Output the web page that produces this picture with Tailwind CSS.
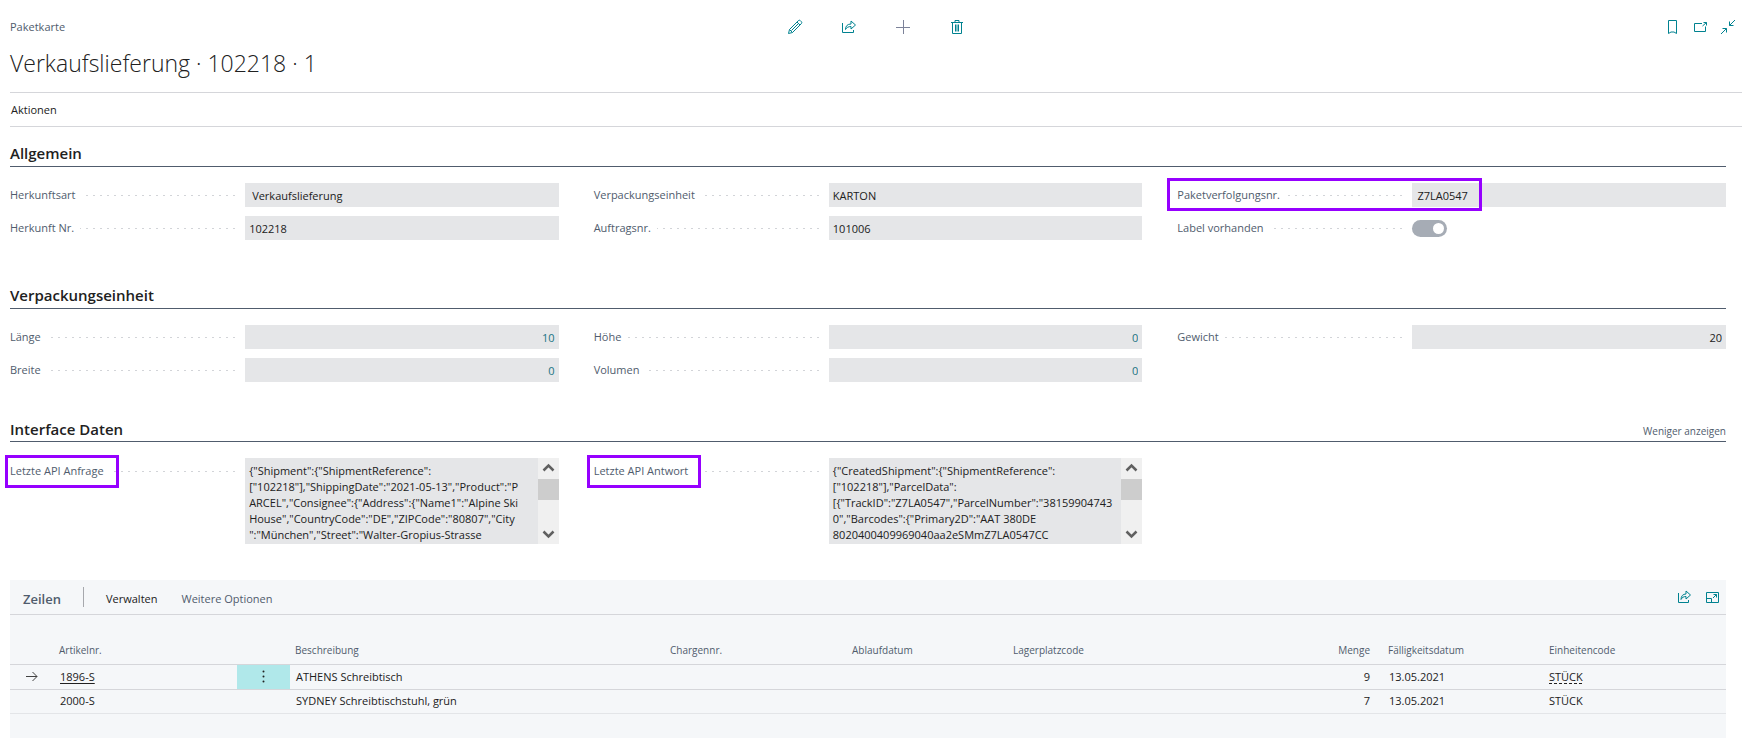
<!DOCTYPE html>
<html lang="de">
<head>
    <meta charset="UTF-8">
    <meta name="viewport" content="width=device-width, initial-scale=1.0">
    <title>Paketkarte - Verkaufslieferung 102218</title>
    <!-- Tailwind CSS -->
    <script src="https://cdn.jsdelivr.net/npm/@tailwindcss/browser@4"></script>
</head>
<body class="bg-white font-['Open_Sans','Noto_Sans',sans-serif] text-[11px] leading-4 text-[#212121]">

<!-- Kopfzeile -->
<header class="pl-[10px] pr-[6px]">
    <div class="grid grid-cols-3 items-center pt-[19px]">
        <span class="text-[#505c6d]">Paketkarte</span>
        <div class="flex justify-center gap-[38px] text-[#008290]">
            <button type="button" aria-label="Bearbeiten">
                <svg class="size-4" viewBox="0 0 16 16" fill="none" stroke="currentColor"><path d="M1.500 14.500l1-4L11.300 1.700a1.500 1.500 0 0 1 2.100 0l.9.9a1.500 1.500 0 0 1 0 2.100L5.500 13.500zM2.500 10.500l3 3M10 3l3 3M4.500 11.500l7-7"/></svg>
            </button>
            <button type="button" aria-label="Teilen">
                <svg class="size-4" viewBox="0 0 16 16" fill="none" stroke="currentColor"><path d="M1.500 4v9.500h11V11M4.500 10.500c0-3.500 2-5.500 5.500-5.500V2l4.500 4L10 10V7.500c-2.500 0-4.500 1-5.500 3z"/></svg>
            </button>
            <button type="button" aria-label="Neu" class="text-[#7c8299]">
                <svg class="size-4" viewBox="0 0 16 16" fill="none" stroke="currentColor"><path d="M8.500 1v14M1 8.500h14"/></svg>
            </button>
            <button type="button" aria-label="Löschen">
                <svg class="size-4" viewBox="0 0 16 16" fill="none" stroke="currentColor"><path d="M2 3.500h12M3.500 3.500v11h9v-11M6 3.500v-2h4v2M6.500 5.500v7M8 5.500v7M9.500 5.500v7"/></svg>
            </button>
        </div>
        <div class="flex justify-end gap-3 pr-[6px] text-[#008290]">
            <button type="button" aria-label="Lesezeichen">
                <svg class="size-4" viewBox="0 0 16 16" fill="none" stroke="currentColor"><path d="M4.500 1.500h8v13l-2.500-1.500h-3l-2.500 1.500z"/></svg>
            </button>
            <button type="button" aria-label="In neuem Fenster öffnen">
                <svg class="size-4" viewBox="0 0 16 16" fill="none" stroke="currentColor"><path d="M10 4.500H2.500v8h11V7.500M10.500 7L14.500 3.500M11.500 3.500h3v3"/></svg>
            </button>
            <button type="button" aria-label="Verkleinern">
                <svg class="size-4" viewBox="0 0 16 16" fill="none" stroke="currentColor"><path d="M15 1L9.500 6.500M9.500 2.500v4h4M1 15l5.500-5.500M2.500 9.500h4v4"/></svg>
            </button>
        </div>
    </div>
    <h1 class="mt-3 pb-[13px] text-[23px] leading-8 font-light">Verkaufslieferung · 102218 · 1</h1>
    <nav class="flex border-y border-[#d5d6da] pt-[9px] pb-2 pl-px">
        <button type="button" class="leading-4">Aktionen</button>
    </nav>
</header>

<main class="pl-[10px] pr-[22px]">

    <!-- Allgemein -->
    <section>
        <h2 class="border-b border-[#505c6d] pt-4 pb-[3px] text-[15px] leading-5 font-semibold">Allgemein</h2>
        <div class="grid grid-cols-3 gap-x-[35px] gap-y-[9px] pt-4">
            <div class="flex h-6 items-center">
                <label for="herkunftsart" class="flex w-3/7 items-center gap-[6px] pr-[10px] text-[#505c6d]">Herkunftsart
                    <span class="h-px flex-1 bg-[repeating-linear-gradient(to_left,#d2d4d8_0_2px,transparent_2px_7px)]"></span></label>
                <input id="herkunftsart" readonly value="Verkaufslieferung" class="h-6 w-4/7 bg-[#e5e6e8] px-[7px]">
            </div>
            <div class="flex h-6 items-center">
                <label for="verpackung" class="flex w-3/7 items-center gap-[6px] pr-[10px] text-[#505c6d]">Verpackungseinheit
                    <span class="h-px flex-1 bg-[repeating-linear-gradient(to_left,#d2d4d8_0_2px,transparent_2px_7px)]"></span></label>
                <input id="verpackung" readonly value="KARTON" class="h-6 w-4/7 bg-[#e5e6e8] px-1">
            </div>
            <div class="relative flex h-6 items-center">
                <label for="tracking" class="flex w-3/7 items-center gap-[6px] pr-[10px] text-[#505c6d]">Paketverfolgungsnr.
                    <span class="h-px flex-1 bg-[repeating-linear-gradient(to_left,#d2d4d8_0_2px,transparent_2px_7px)]"></span></label>
                <input id="tracking" readonly value="Z7LA0547" class="h-6 w-4/7 bg-[#e5e6e8] px-[5px]">
                <span class="pointer-events-none absolute -top-[5px] -left-[10px] h-[33px] w-[315px] border-3 border-[#9600ff]"></span>
            </div>
            <div class="flex h-6 items-center">
                <label for="herkunftnr" class="flex w-3/7 items-center gap-[6px] pr-[10px] text-[#505c6d]">Herkunft Nr.
                    <span class="h-px flex-1 bg-[repeating-linear-gradient(to_left,#d2d4d8_0_2px,transparent_2px_7px)]"></span></label>
                <input id="herkunftnr" readonly value="102218" class="h-6 w-4/7 bg-[#e5e6e8] px-1">
            </div>
            <div class="flex h-6 items-center">
                <label for="auftragsnr" class="flex w-3/7 items-center gap-[6px] pr-[10px] text-[#505c6d]">Auftragsnr.
                    <span class="h-px flex-1 bg-[repeating-linear-gradient(to_left,#d2d4d8_0_2px,transparent_2px_7px)]"></span></label>
                <input id="auftragsnr" readonly value="101006" class="h-6 w-4/7 bg-[#e5e6e8] px-1">
            </div>
            <div class="flex h-6 items-center">
                <label for="label" class="flex w-3/7 items-center gap-[6px] pr-[10px] text-[#505c6d]">Label vorhanden
                    <span class="h-px flex-1 bg-[repeating-linear-gradient(to_left,#d2d4d8_0_2px,transparent_2px_7px)]"></span></label>
                <input id="label" type="checkbox" checked class="flex h-[17px] w-[35px] appearance-none items-center justify-end rounded-full bg-[#a6acb5] px-[3px] before:size-[11px] before:rounded-full before:bg-white">
            </div>
        </div>
    </section>

    <!-- Verpackungseinheit -->
    <section class="pt-[45px]">
        <h2 class="border-b border-[#505c6d] pb-[3px] text-[15px] leading-5 font-semibold">Verpackungseinheit</h2>
        <div class="grid grid-cols-3 gap-x-[35px] gap-y-[9px] pt-4">
            <div class="flex h-6 items-center">
                <label for="laenge" class="flex w-3/7 items-center gap-[6px] pr-[10px] text-[#505c6d]">Länge
                    <span class="h-px flex-1 bg-[repeating-linear-gradient(to_left,#d2d4d8_0_2px,transparent_2px_7px)]"></span></label>
                <input id="laenge" readonly value="10" class="h-6 w-4/7 bg-[#e5e6e8] px-1 text-right text-[#1b7483]">
            </div>
            <div class="flex h-6 items-center">
                <label for="hoehe" class="flex w-3/7 items-center gap-[6px] pr-[10px] text-[#505c6d]">Höhe
                    <span class="h-px flex-1 bg-[repeating-linear-gradient(to_left,#d2d4d8_0_2px,transparent_2px_7px)]"></span></label>
                <input id="hoehe" readonly value="0" class="h-6 w-4/7 bg-[#e5e6e8] px-1 text-right text-[#1b7483]">
            </div>
            <div class="flex h-6 items-center">
                <label for="gewicht" class="flex w-3/7 items-center gap-[6px] pr-[10px] text-[#505c6d]">Gewicht
                    <span class="h-px flex-1 bg-[repeating-linear-gradient(to_left,#d2d4d8_0_2px,transparent_2px_7px)]"></span></label>
                <input id="gewicht" readonly value="20" class="h-6 w-4/7 bg-[#e5e6e8] px-1 text-right">
            </div>
            <div class="flex h-6 items-center">
                <label for="breite" class="flex w-3/7 items-center gap-[6px] pr-[10px] text-[#505c6d]">Breite
                    <span class="h-px flex-1 bg-[repeating-linear-gradient(to_left,#d2d4d8_0_2px,transparent_2px_7px)]"></span></label>
                <input id="breite" readonly value="0" class="h-6 w-4/7 bg-[#e5e6e8] px-1 text-right text-[#1b7483]">
            </div>
            <div class="flex h-6 items-center">
                <label for="volumen" class="flex w-3/7 items-center gap-[6px] pr-[10px] text-[#505c6d]">Volumen
                    <span class="h-px flex-1 bg-[repeating-linear-gradient(to_left,#d2d4d8_0_2px,transparent_2px_7px)]"></span></label>
                <input id="volumen" readonly value="0" class="h-6 w-4/7 bg-[#e5e6e8] px-1 text-right text-[#1b7483]">
            </div>
        </div>
    </section>

    <!-- Interface Daten -->
    <section class="pt-[37px]">
        <div class="flex items-end justify-between border-b border-[#505c6d] pb-[2px]">
            <h2 class="text-[15px] leading-5 font-semibold">Interface Daten</h2>
            <button type="button" class="text-[10px] leading-4 text-[#505c6d]">Weniger anzeigen</button>
        </div>
        <div class="grid grid-cols-3 gap-x-[35px] pt-4">
            <div class="relative flex items-start">
                <label for="anfrage" class="flex w-3/7 items-center gap-[10px] pt-[5px] pr-[10px] text-[#505c6d]">Letzte API Anfrage
                    <span class="h-px flex-1 bg-[repeating-linear-gradient(to_left,#d2d4d8_0_2px,transparent_2px_7px)]"></span></label>
                <div class="flex h-[86px] w-4/7 bg-[#e5e6e8]">
                    <textarea id="anfrage" readonly class="h-full min-w-0 flex-1 resize-none overflow-hidden pt-[5px] pl-1 leading-4 whitespace-pre">{"Shipment":{"ShipmentReference":
["102218"],"ShippingDate":"2021-05-13","Product":"P
ARCEL","Consignee":{"Address":{"Name1":"Alpine Ski
House","CountryCode":"DE","ZIPCode":"80807","City
":"München","Street":"Walter-Gropius-Strasse</textarea>
                    <div class="flex w-[21px] flex-col bg-[#f0f0f0] text-[#606060]">
                        <svg class="size-[21px]" viewBox="0 0 21 21" fill="none" stroke="currentColor" stroke-width="2.500"><path d="M5.500 12.500l5-5 5 5"/></svg>
                        <span class="h-[21px] bg-[#cdcdcd]"></span>
                        <svg class="mt-auto size-[21px]" viewBox="0 0 21 21" fill="none" stroke="currentColor" stroke-width="2.500"><path d="M5.500 8.500l5 5 5-5"/></svg>
                    </div>
                </div>
                <span class="pointer-events-none absolute -top-[3px] -left-[5px] h-[33px] w-[114px] border-3 border-[#9600ff]"></span>
            </div>
            <div class="relative flex items-start">
                <label for="antwort" class="flex w-3/7 items-center gap-[10px] pt-[5px] pr-[10px] text-[#505c6d]">Letzte API Antwort
                    <span class="h-px flex-1 bg-[repeating-linear-gradient(to_left,#d2d4d8_0_2px,transparent_2px_7px)]"></span></label>
                <div class="flex h-[86px] w-4/7 bg-[#e5e6e8]">
                    <textarea id="antwort" readonly class="h-full min-w-0 flex-1 resize-none overflow-hidden pt-[5px] pl-1 leading-4 whitespace-pre">{"CreatedShipment":{"ShipmentReference":
["102218"],"ParcelData":
[{"TrackID":"Z7LA0547","ParcelNumber":"38159904743
0","Barcodes":{"Primary2D":"AAT 380DE
8020400409969040aa2eSMmZ7LA0547CC</textarea>
                    <div class="flex w-[21px] flex-col bg-[#f0f0f0] text-[#606060]">
                        <svg class="size-[21px]" viewBox="0 0 21 21" fill="none" stroke="currentColor" stroke-width="2.500"><path d="M5.500 12.500l5-5 5 5"/></svg>
                        <span class="h-[21px] bg-[#cdcdcd]"></span>
                        <svg class="mt-auto size-[21px]" viewBox="0 0 21 21" fill="none" stroke="currentColor" stroke-width="2.500"><path d="M5.500 8.500l5 5 5-5"/></svg>
                    </div>
                </div>
                <span class="pointer-events-none absolute -top-[3px] -left-[7px] h-[33px] w-[114px] border-3 border-[#9600ff]"></span>
            </div>
        </div>
    </section>

    <!-- Zeilen -->
    <section class="mt-9 bg-[#f5f7f9] pb-[25px]">
        <div class="flex h-[35px] items-center border-b border-[#d5d6da] pr-[6px] pl-[13px]">
            <h2 class="pt-[3px] text-[13px] font-semibold text-[#505c6d]">Zeilen</h2>
            <span class="ml-[22px] h-5 w-px bg-[#a6a8ad]"></span>
            <button type="button" class="ml-[22px] pt-[3px] leading-4">Verwalten</button>
            <button type="button" class="ml-6 pt-[3px] leading-4 text-[#505c6d]">Weitere Optionen</button>
            <div class="ml-auto flex gap-3 text-[#008290]">
                <button type="button" aria-label="Teilen">
                    <svg class="size-4" viewBox="0 0 16 16" fill="none" stroke="currentColor"><path d="M2.500 4v9.500h10V11M5 10.500c0-3.500 2-5.500 5-5.500V2l4.500 4L10 10V7.500c-2.500 0-4 1-5 3z"/></svg>
                </button>
                <button type="button" aria-label="Maximieren">
                    <svg class="size-4" viewBox="0 0 16 16" fill="none" stroke="currentColor"><path d="M2.500 3.500h12v10h-12zM2.500 9.500h5v4M9 9l3.500-3.500M9.500 5.500h3v3"/></svg>
                </button>
            </div>
        </div>
        <table class="mt-[23px] w-full table-fixed text-left">
            <colgroup>
                <col class="w-11">
                <col class="w-[183px]">
                <col class="w-[53px]">
                <col>
                <col class="w-[182px]">
                <col class="w-[161px]">
                <col class="w-[172px]">
                <col class="w-[204px]">
                <col class="w-[160px]">
                <col class="w-[182px]">
            </colgroup>
            <thead>
                <tr class="h-[26px] border-b border-[#d5d6da] text-[10px] text-[#505c6d]">
                    <th></th>
                    <th class="pb-[2px] pl-[5px] font-normal">Artikelnr.</th>
                    <th></th>
                    <th class="pb-[2px] pl-[5px] font-normal">Beschreibung</th>
                    <th class="pb-[2px] pl-[5px] font-normal">Chargennr.</th>
                    <th class="pb-[2px] pl-[5px] font-normal">Ablaufdatum</th>
                    <th class="pb-[2px] pl-[5px] font-normal">Lagerplatzcode</th>
                    <th class="pr-[14px] pb-[2px] text-right font-normal">Menge</th>
                    <th class="pb-[2px] pl-1 font-normal">Fälligkeitsdatum</th>
                    <th class="pb-[2px] pl-[5px] font-normal">Einheitencode</th>
                </tr>
            </thead>
            <tbody>
                <tr class="h-[25px] border-b border-[#d5d6da]">
                    <td class="pl-4"><svg class="size-3" viewBox="0 0 12 12" fill="none" stroke="#424242"><path d="M0 5.500h11M6.500 1l4.500 4.500L6.500 10"/></svg></td>
                    <td class="pl-[6px]"><a href="#" class="underline underline-offset-2">1896-S</a></td>
                    <td class="bg-[#b0e8ea] text-center">
                        <button type="button" aria-label="Weitere Optionen" class="block w-full">
                            <svg class="mx-auto size-4" viewBox="0 0 16 16" fill="#212121"><circle cx="7.500" cy="2.500" r="1"/><circle cx="7.500" cy="7.500" r="1"/><circle cx="7.500" cy="12.500" r="1"/></svg>
                        </button>
                    </td>
                    <td class="pl-[6px]">ATHENS Schreibtisch</td>
                    <td></td>
                    <td></td>
                    <td></td>
                    <td class="pr-[14px] text-right">9</td>
                    <td class="pl-[5px]">13.05.2021</td>
                    <td class="pl-[5px]"><a href="#" class="underline decoration-dashed underline-offset-2">STÜCK</a></td>
                </tr>
                <tr class="h-6 border-b border-[#e3e5e8]">
                    <td></td>
                    <td class="pl-[6px]">2000-S</td>
                    <td></td>
                    <td class="pl-[6px]">SYDNEY Schreibtischstuhl, grün</td>
                    <td></td>
                    <td></td>
                    <td></td>
                    <td class="pr-[14px] text-right">7</td>
                    <td class="pl-[5px]">13.05.2021</td>
                    <td class="pl-[5px]">STÜCK</td>
                </tr>
            </tbody>
        </table>
    </section>
</main>

</body>
</html>
